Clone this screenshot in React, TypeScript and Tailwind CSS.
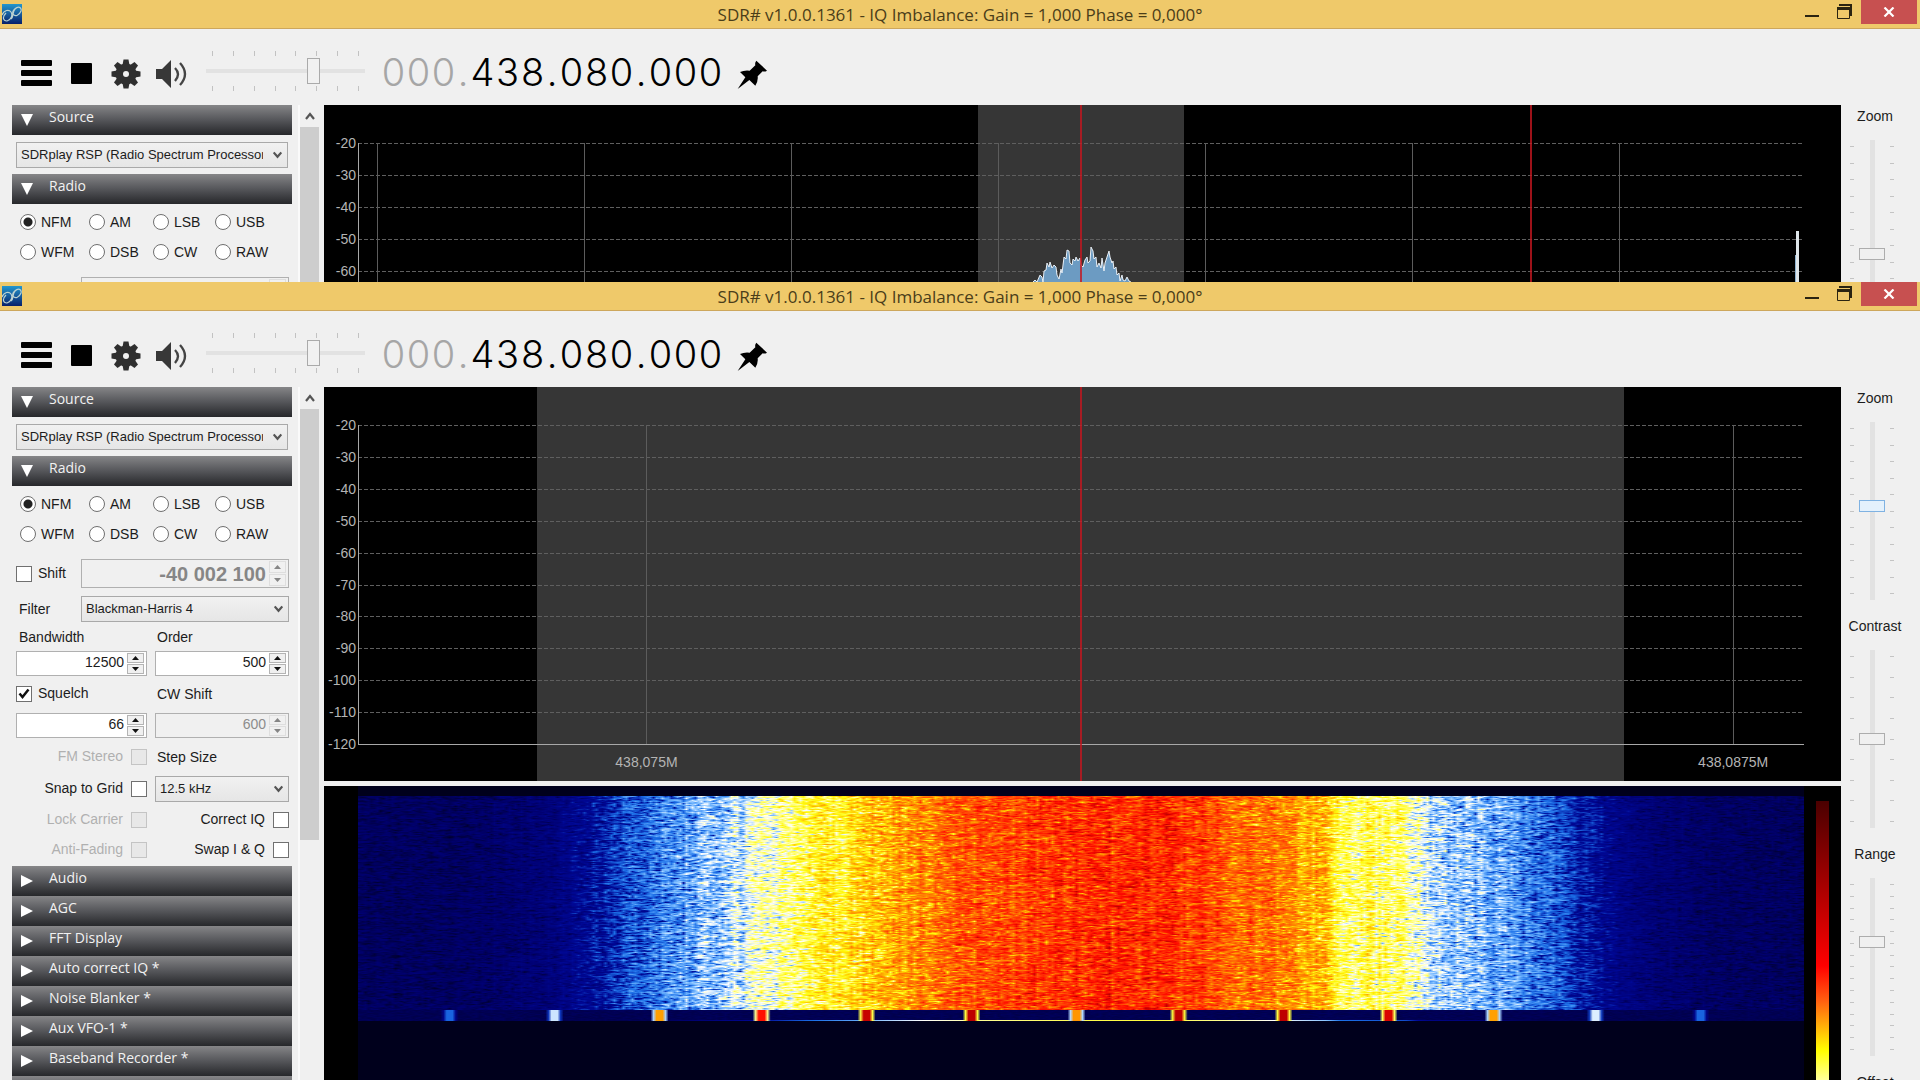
import { useEffect, useId, useRef } from "react";
import type { ReactNode } from "react";

type SpectrumProps = {
  band: [number, number];
  gridLines: number[];
  tuned: number[];
  labels?: { x: number; text: string }[];
  trace?: string;
};

type WindowProps = {
  zoom: number;
  zoomActive?: boolean;
  spectrum: SpectrumProps;
  className: string;
};

const MODES = ["NFM", "AM", "LSB", "USB", "WFM", "DSB", "CW", "RAW"];

const PLUGINS = [
  "Audio",
  "AGC",
  "FFT Display",
  "Auto correct IQ *",
  "Noise Blanker *",
  "Aux VFO-1 *",
  "Baseband Recorder *",
  "Frequency Manager *",
];

const DB_LEVELS = [-20, -30, -40, -50, -60, -70, -80, -90, -100, -110, -120];

// plot geometry, in pixels
const PLOT_TOP = 38;
const PLOT_HEIGHT = 319;
const dbY = (index: number) => PLOT_TOP + Math.round((index * PLOT_HEIGHT) / 10);

const WIDE_SPECTRUM: SpectrumProps = {
  band: [42.9, 57.1],
  gridLines: [1.35, 15.65, 29.95, 44.3, 58.6, 72.9, 87.25],
  tuned: [50, 81.1],
  trace:
    "-48,177 -46,175 -44,177 -41,170 -39,172 -38,177 -37,166 -35,165 -34,158 -32,162 -31,157 -29,163 -27,160 -25,162 -24,170 -22,174 -20,164 -19,168 -17,152 -15,154 -14,145 -12,146 -11,158 -9,160 -8,154 -6,156 -5,152 -3,156 -1,153 0,160 2,162 4,155 6,152 7,158 9,156 10,142 12,146 13,154 15,152 16,162 18,158 20,163 21,153 23,166 24,158 26,152 28,146 29,152 31,158 32,156 33,164 35,162 36,170 38,168 39,176 41,170 42,175 44,176 46,172 48,176 50,177",
};

const NARROW_SPECTRUM: SpectrumProps = {
  band: [12.4, 87.55],
  gridLines: [19.95, 95.1],
  tuned: [50],
  labels: [
    { x: 19.95, text: "438,075M" },
    { x: 95.1, text: "438,0875M" },
  ],
};

export default function App() {
  return (
    <div className="flex h-screen flex-col overflow-hidden bg-[#f0f0f0] font-['Liberation_Sans',sans-serif] text-[14px] text-[#1c1c1c]">
      <SdrWindow className="h-[282px] shrink-0" zoom={35} spectrum={WIDE_SPECTRUM} />
      <SdrWindow className="min-h-0 flex-1" zoom={53} zoomActive spectrum={NARROW_SPECTRUM} />
    </div>
  );
}

function SdrWindow({ zoom, zoomActive = false, spectrum, className }: WindowProps) {
  return (
    <section className={`flex flex-col overflow-hidden ${className}`}>
      <TitleBar />
      <Toolbar />
      <div className="flex min-h-0 flex-1 overflow-hidden">
        <Sidebar />
        <PanelScrollBar />
        <main className="flex min-w-0 flex-1 flex-col gap-[5px]">
          <Spectrum {...spectrum} />
          <Waterfall />
        </main>
        <aside className="flex w-[79px] shrink-0 flex-col">
          <LevelSlider label="Zoom" value={zoom} ticks={11} active={zoomActive} />
          <LevelSlider label="Contrast" value={50} ticks={9} />
          <LevelSlider label="Range" value={65} ticks={15} />
          <LevelSlider label="Offset" value={50} ticks={11} />
        </aside>
      </div>
    </section>
  );
}

function TitleBar() {
  return (
    <header className="flex h-[29px] shrink-0 items-start border-b border-[#cda75c] bg-[#efc96a]">
      <div className="w-[180px] pl-[2px] pt-1">
        <AppLogo />
      </div>
      <h1 className="flex-1 text-center font-['Open_Sans',sans-serif] text-[17px] leading-[30px] text-[#4a3d19]">
        SDR# v1.0.0.1361 - IQ Imbalance: Gain = 1,000 Phase = 0,000°
      </h1>
      <div className="flex w-[180px] justify-end pr-[3px]">
        <button type="button" aria-label="Minimize" className="flex h-6 w-8 justify-center pt-[15px]">
          <span className="h-[2px] w-[14px] bg-[#2b2411]" />
        </button>
        <button type="button" aria-label="Restore" className="flex h-6 w-8 justify-center pt-1">
          <svg width="15" height="15" viewBox="0 0 15 15" fill="none" stroke="#2b2411">
            <path d="M2 1H14V12" strokeWidth="2" />
            <path d="M.5 4V14.500H12.500V4" />
            <path d="M0 4.500H13" strokeWidth="3" />
          </svg>
        </button>
        <button
          type="button"
          aria-label="Close"
          className="ml-px flex h-6 w-14 items-center justify-center bg-[#c75050]"
        >
          <svg width="12" height="10" viewBox="0 0 12 10" stroke="#fff" strokeWidth="2.200">
            <path d="M1.500 .5L10.500 9.500M10.500 .5L1.500 9.500" />
          </svg>
        </button>
      </div>
    </header>
  );
}

function AppLogo() {
  const gradient = useId();
  return (
    <svg width="20" height="20" viewBox="0 0 20 20" fill="none" aria-hidden="true">
      <defs>
        <linearGradient id={gradient} x1="0" y1="0" x2="0" y2="1">
          <stop offset="0" stopColor="#2497cd" />
          <stop offset="1" stopColor="#08206b" />
        </linearGradient>
      </defs>
      <rect width="20" height="20" fill={`url(#${gradient})`} />
      <path
        d="M0 11C2 6 7 5 9 8C11 11 9 16 5 17C1 17 0 13 4 9M9 15C12 13 10 8 13 5C16 2 20 3 19 7C17 12 13 13 11 10C10 8 12 5 14 4"
        stroke="#bcd3d2"
        strokeWidth="1.200"
      />
    </svg>
  );
}

function Toolbar() {
  return (
    <div className="flex h-[76px] shrink-0 items-start pl-[21px]">
      <button type="button" aria-label="Menu" className="mt-[31px] flex w-[31px] flex-col gap-1">
        <span className="h-[6px] w-full rounded-[1px] bg-black" />
        <span className="h-[6px] w-full rounded-[1px] bg-black" />
        <span className="h-[6px] w-full rounded-[1px] bg-black" />
      </button>
      <button type="button" aria-label="Stop" className="ml-[19px] mt-[34px] size-[21px] rounded-[1px] bg-black" />
      <button type="button" aria-label="Settings" className="ml-[19px] mt-[30px]">
        <GearIcon />
      </button>
      <button type="button" aria-label="Mute" className="ml-[15px] mt-[31px]">
        <SpeakerIcon />
      </button>
      <div className="ml-[19px] mt-[22px] flex w-[159px] flex-col">
        <HorizontalTicks />
        <input
          type="range"
          aria-label="Volume"
          defaultValue={69}
          className="my-[2px] h-[26px] w-full appearance-none bg-[linear-gradient(#e2e2e2,#e2e2e2)] bg-[length:100%_4px] bg-center bg-no-repeat [&::-webkit-slider-thumb]:h-[26px] [&::-webkit-slider-thumb]:w-[13px] [&::-webkit-slider-thumb]:appearance-none [&::-webkit-slider-thumb]:border [&::-webkit-slider-thumb]:border-[#aaaaaa] [&::-webkit-slider-thumb]:bg-[#f1f1f1]"
        />
        <HorizontalTicks />
      </div>
      <Frequency />
      <button type="button" aria-label="Center" className="ml-[14px] mt-[31px]">
        <PinIcon />
      </button>
    </div>
  );
}

function HorizontalTicks() {
  return (
    <div className="flex justify-between px-[6px]">
      {Array.from({ length: 8 }, (_, i) => (
        <span key={i} className="h-[5px] w-px bg-[#c2c2c2]" />
      ))}
    </div>
  );
}

function Frequency() {
  return (
    <div
      aria-label="Frequency"
      className="ml-4 mt-[21px] flex font-['Inter',sans-serif] text-[38px] font-light leading-[44px] text-black"
    >
      {"000.438.080.000".split("").map((char, i) => (
        <span
          key={i}
          className={`text-center ${char === "." ? "w-[14px]" : "w-[25px]"} ${i < 4 ? "text-[#a6a6a6]" : ""}`}
        >
          {char}
        </span>
      ))}
    </div>
  );
}

function GearIcon() {
  return (
    <svg width="30" height="30" viewBox="-15 -15 30 30" fill="#2f2f2f">
      {[0, 45, 90, 135].map((angle) => (
        <path key={angle} d="M-2.500 -14.500H2.500L3.500 -9V9L2.500 14.500H-2.500L-3.500 9V-9Z" transform={`rotate(${angle})`} />
      ))}
      <circle r="10.500" />
      <circle r="3" fill="#f0f0f0" />
    </svg>
  );
}

function SpeakerIcon() {
  return (
    <svg width="31" height="28" viewBox="0 0 31 28" fill="none" stroke="#444" strokeWidth="2.300">
      <path d="M0 9H6L15 0V28L6 19H0Z" fill="#383838" stroke="none" />
      <path d="M19 8Q25 14 19 21M24 3Q34 14 24 25" />
    </svg>
  );
}

function PinIcon() {
  return (
    <svg width="30" height="30" viewBox="0 0 90 90" fill="#000">
      <path d="M58 2L90 32Q84 36 77 34L62 49Q64 63 55 77L37 60L2 87L25 52L9 36Q22 30 38 32L55 16Q53 8 58 2Z" />
    </svg>
  );
}

function SectionHeader({ title, open = false }: { title: string; open?: boolean }) {
  return (
    <button
      type="button"
      aria-expanded={open}
      className="flex h-[30px] w-full shrink-0 items-start bg-linear-to-b from-[#868688] via-[#55565a] to-[#27282b] pl-2 text-left font-['Open_Sans',sans-serif] text-[14px] leading-[24px] text-[#f2f2f2]"
    >
      <svg width="14" height="14" viewBox="0 0 14 14" fill="#fff" className="mt-2">
        <path d={open ? "M1 1H13L7 13Z" : "M1 1L13 7L1 13Z"} />
      </svg>
      <span className="ml-[15px]">{title}</span>
    </button>
  );
}

function Dropdown({ label, value, className = "" }: { label: string; value: string; className?: string }) {
  return (
    <div className={`relative h-[26px] ${className}`}>
      <select
        aria-label={label}
        className="h-full w-full appearance-none overflow-hidden border border-[#a9a9a9] bg-linear-to-b from-[#f1f1f1] to-[#e6e6e6] pl-1 pr-6 text-[13px] text-[#1c1c1c]"
      >
        <option>{value}</option>
      </select>
      <svg
        width="9"
        height="8"
        viewBox="0 0 9 8"
        fill="none"
        stroke="#555"
        strokeWidth="2.200"
        className="pointer-events-none absolute right-[6px] top-[9px]"
      >
        <path d="M.7 1.500L4.500 5.800L8.300 1.500" />
      </svg>
    </div>
  );
}

function NumberBox({
  label,
  value,
  disabled = false,
  large = false,
  className = "",
}: {
  label: string;
  value: string;
  disabled?: boolean;
  large?: boolean;
  className?: string;
}) {
  return (
    <div
      className={`flex border border-[#b0b0b0] p-px ${large ? "h-[29px]" : "h-[25px]"} ${disabled ? "bg-[#f0f0f0] text-[#8c8c8c]" : "bg-white"} ${className}`}
    >
      <input
        type="text"
        aria-label={label}
        defaultValue={value}
        disabled={disabled}
        className={`w-0 flex-1 bg-transparent pr-[3px] text-right ${large ? "text-[20px] font-semibold text-[#868686]" : "pb-[2px]"}`}
      />
      <div className="flex w-[18px] flex-col gap-px pr-px">
        <SpinButton label={`${label} up`} d="M0 4L3.500 0L7 4Z" disabled={disabled} />
        <SpinButton label={`${label} down`} d="M0 0L3.500 4L7 0Z" disabled={disabled} />
      </div>
    </div>
  );
}

function SpinButton({ label, d, disabled }: { label: string; d: string; disabled: boolean }) {
  return (
    <button
      type="button"
      aria-label={label}
      disabled={disabled}
      className={`flex flex-1 items-center justify-center border bg-[#f0f0f0] ${disabled ? "border-[#dedede]" : "border-[#b4b4b4]"}`}
    >
      <svg width="7" height="4" viewBox="0 0 7 4" fill={disabled ? "#858585" : "#111"}>
        <path d={d} />
      </svg>
    </button>
  );
}

function CheckField({
  label,
  checked = false,
  disabled = false,
  boxFirst = false,
}: {
  label: string;
  checked?: boolean;
  disabled?: boolean;
  boxFirst?: boolean;
}) {
  return (
    <label
      className={`flex h-[22px] items-center ${boxFirst ? "flex-row-reverse justify-end gap-[6px]" : "justify-end gap-2"} ${disabled ? "text-[#b0b0b0]" : ""}`}
    >
      <span className="-mt-px whitespace-nowrap">{label}</span>
      <span className="relative size-4">
        <input
          type="checkbox"
          defaultChecked={checked}
          disabled={disabled}
          className="peer block size-4 appearance-none border border-[#707070] bg-white disabled:border-[#c4c4c4] disabled:bg-[#e8e8e8]"
        />
        <svg
          width="12"
          height="12"
          viewBox="0 0 12 12"
          fill="none"
          stroke="#111"
          strokeWidth="2.500"
          className="pointer-events-none absolute left-[2px] top-[2px] hidden peer-checked:block"
        >
          <path d="M1.500 5.500L4.500 9L10.500 1.500" />
        </svg>
      </span>
    </label>
  );
}

function TwoColumns({ children, className = "" }: { children: ReactNode; className?: string }) {
  return <div className={`grid grid-cols-[131px_1fr] items-center gap-x-2 ${className}`}>{children}</div>;
}

function Sidebar() {
  const modeGroup = useId();
  return (
    <div className="ml-3 flex w-[280px] shrink-0 flex-col overflow-hidden">
      <SectionHeader title="Source" open />
      <Dropdown
        label="Source device"
        value="SDRplay RSP (Radio Spectrum Processor)"
        className="mx-1 mb-[6px] mt-[7px] shrink-0"
      />
      <SectionHeader title="Radio" open />
      <form className="flex shrink-0 flex-col pl-1 pr-[3px] pt-[3px]">
        <fieldset className="grid grid-cols-[69px_64px_62px_1fr] pl-1">
          {MODES.map((mode, i) => (
            <label key={mode} className="flex h-[30px] items-center gap-[5px]">
              <input
                type="radio"
                name={modeGroup}
                defaultChecked={i === 0}
                className="size-4 appearance-none rounded-full border border-[#6f6f6f] bg-white checked:bg-[radial-gradient(circle,#222_4px,#fff_5px)]"
              />
              {mode}
            </label>
          ))}
        </fieldset>

        <div className="mt-[10px] flex items-center">
          <div className="w-[65px]">
            <CheckField label="Shift" boxFirst />
          </div>
          <NumberBox label="Shift frequency" value="-40 002 100" disabled large className="flex-1" />
        </div>
        <div className="mt-2 flex items-center">
          <span className="w-[65px] pl-[3px]">Filter</span>
          <Dropdown label="Filter" value="Blackman-Harris 4" className="flex-1" />
        </div>

        <TwoColumns className="mt-1 h-[22px]">
          <span className="pl-[3px]">Bandwidth</span>
          <span className="pl-[2px]">Order</span>
        </TwoColumns>
        <TwoColumns className="mt-[3px]">
          <NumberBox label="Bandwidth" value="12500" />
          <NumberBox label="Order" value="500" />
        </TwoColumns>

        <TwoColumns className="mt-[7px]">
          <CheckField label="Squelch" checked boxFirst />
          <span className="pl-[2px]">CW Shift</span>
        </TwoColumns>
        <TwoColumns className="mt-2">
          <NumberBox label="Squelch level" value="66" />
          <NumberBox label="CW Shift" value="600" disabled />
        </TwoColumns>

        <TwoColumns className="mt-2">
          <CheckField label="FM Stereo" disabled />
          <span className="pl-[2px]">Step Size</span>
        </TwoColumns>
        <TwoColumns className="mt-2">
          <CheckField label="Snap to Grid" />
          <Dropdown label="Step size" value="12.5 kHz" />
        </TwoColumns>
        <TwoColumns className="mt-[7px]">
          <CheckField label="Lock Carrier" disabled />
          <CheckField label="Correct IQ" />
        </TwoColumns>
        <TwoColumns className="mb-[5px] mt-2">
          <CheckField label="Anti-Fading" disabled />
          <CheckField label="Swap I & Q" />
        </TwoColumns>
      </form>
      {PLUGINS.map((title) => (
        <SectionHeader key={title} title={title} />
      ))}
    </div>
  );
}

function PanelScrollBar() {
  return (
    <div className="ml-[6px] mr-[5px] flex w-[21px] shrink-0 flex-col border-l-2 border-[#fafafa]">
      <button type="button" aria-label="Scroll up" className="flex h-[22px] shrink-0 items-center justify-center">
        <svg width="10" height="8" viewBox="0 0 10 8" fill="none" stroke="#555" strokeWidth="2.200">
          <path d="M1 7L5 2L9 7" />
        </svg>
      </button>
      <div className="h-[431px] shrink-0 bg-[#cdcdcd]" />
    </div>
  );
}

function Spectrum({ band, gridLines, tuned, labels = [], trace }: SpectrumProps) {
  return (
    <div className="flex h-[394px] shrink-0 bg-black">
      <svg width="34" height="394" fill="#b4b4b4" fontSize="14" textAnchor="end">
        {DB_LEVELS.map((db, i) => (
          <text key={db} x="32" y={dbY(i) + 5}>
            {db}
          </text>
        ))}
      </svg>
      <svg height="394" className="w-0 flex-1 overflow-visible" shapeRendering="crispEdges">
        <rect x={`${band[0]}%`} width={`${band[1] - band[0]}%`} height="100%" fill="#363636" />
        {DB_LEVELS.slice(0, -1).map((db, i) => (
          <line key={db} x1="0" x2="100%" y1={dbY(i)} y2={dbY(i)} stroke="#5f5f5f" strokeDasharray="4 2" />
        ))}
        {gridLines.map((x) => (
          <line key={x} x1={`${x}%`} x2={`${x}%`} y1={PLOT_TOP} y2={PLOT_TOP + PLOT_HEIGHT} stroke="#5c5c5c" />
        ))}
        <path d={`M.5 ${PLOT_TOP}V${PLOT_TOP + PLOT_HEIGHT}`} stroke="#a8a8a8" />
        <line
          x1="0"
          x2="100%"
          y1={PLOT_TOP + PLOT_HEIGHT}
          y2={PLOT_TOP + PLOT_HEIGHT}
          stroke="#a8a8a8"
        />
        {trace && (
          <>
            <svg x="50%" overflow="visible">
              <polygon points={`-48,394 ${trace} 50,394`} fill="#6c9bc2" />
              <polyline points={trace} fill="none" stroke="#e8eef4" shapeRendering="auto" />
            </svg>
            <svg x="99.500%" overflow="visible">
              <rect x="-2" y="150" width="2" height="244" fill="#8fb3cf" />
              <rect x="-1" y="126" width="3" height="268" fill="#dfe6ea" />
            </svg>
          </>
        )}
        {tuned.map((x) => (
          <line key={x} x1={`${x}%`} x2={`${x}%`} y1="0" y2="100%" stroke="#c4161f" strokeWidth="2" strokeOpacity=".8" />
        ))}
        {labels.map(({ x, text }) => (
          <text key={text} x={`${x}%`} y="380" fill="#b4b4b4" fontSize="14" textAnchor="middle">
            {text}
          </text>
        ))}
      </svg>
      <div className="w-[37px]" />
    </div>
  );
}

const PALETTE: [number, number, number, number][] = [
  [0, 0, 0, 28],
  [0.14, 0, 0, 110],
  [0.26, 0, 8, 150],
  [0.35, 28, 112, 232],
  [0.43, 120, 186, 255],
  [0.51, 255, 255, 255],
  [0.58, 255, 255, 130],
  [0.65, 255, 250, 10],
  [0.75, 255, 150, 0],
  [0.84, 255, 75, 5],
  [0.93, 255, 10, 0],
  [1, 190, 0, 0],
];

// average signal level along the width
const PROFILE: [number, number][] = [
  [0, 0.11],
  [0.08, 0.12],
  [0.13, 0.17],
  [0.16, 0.26],
  [0.19, 0.33],
  [0.225, 0.41],
  [0.26, 0.48],
  [0.285, 0.55],
  [0.31, 0.61],
  [0.35, 0.69],
  [0.39, 0.78],
  [0.43, 0.84],
  [0.5, 0.88],
  [0.55, 0.89],
  [0.6, 0.84],
  [0.64, 0.77],
  [0.67, 0.71],
  [0.68, 0.62],
  [0.725, 0.59],
  [0.74, 0.48],
  [0.78, 0.43],
  [0.82, 0.35],
  [0.86, 0.25],
  [0.89, 0.17],
  [0.94, 0.12],
  [1, 0.11],
];

function colorAt(value: number) {
  const v = Math.min(1, Math.max(0, value));
  let i = 1;
  while (PALETTE[i][0] < v) i++;
  const a = PALETTE[i - 1];
  const b = PALETTE[i];
  const t = (v - a[0]) / (b[0] - a[0]);
  return [1, 2, 3].map((c) => a[c] + (b[c] - a[c]) * t);
}

function levelAt(x: number) {
  let i = 1;
  while (PROFILE[i][0] < x) i++;
  const a = PROFILE[i - 1];
  const b = PROFILE[i];
  return a[1] + ((b[1] - a[1]) * (x - a[0])) / (b[0] - a[0]);
}

const CANVAS_WIDTH = 482;
const NOISE_TOP = 10;
const NOISE_END = 224;
const STRIP_END = 235;
const CANVAS_HEIGHT = 294;
const CARRIERS = [0.34, 0.48, 0.74, 0.92, 0.99, 1, 0.75, 1, 1, 0.97, 0.74, 0.49, 0.34];

function drawWaterfall(canvas: HTMLCanvasElement) {
  const ctx = canvas.getContext("2d");
  if (!ctx) return;
  const image = ctx.createImageData(CANVAS_WIDTH, CANVAS_HEIGHT);

  let seed = 1361;
  const random = () => {
    seed = (seed * 1664525 + 1013904223) % 4294967296;
    return seed / 4294967296;
  };
  const offsets = Array.from({ length: CANVAS_WIDTH }, () => (random() - 0.5) * 0.06);
  const previous = new Float32Array(CANVAS_WIDTH);

  for (let y = 0; y < CANVAS_HEIGHT; y++) {
    let smear = 0;
    for (let x = 0; x < CANVAS_WIDTH; x++) {
      const pos = x / (CANVAS_WIDTH - 1);
      let value = 0;
      if (y >= NOISE_TOP && y < NOISE_END) {
        const level = levelAt(pos);
        // log of an exponential gives the long dips of a noise floor
        const burst = Math.log10(-Math.log(1 - random() * 0.998) + 0.02) + 0.18;
        smear = smear * 0.35 + burst * 0.65;
        const noise = smear * 0.8 + previous[x] * 0.2;
        previous[x] = smear;
        value = level + noise * (0.05 + Math.min(level, 0.45) * 0.3) + offsets[x] * Math.min(1, level * 2);
      } else if (y >= NOISE_END && y < STRIP_END) {
        value = 0.08 + random() * 0.03;
        if (y === STRIP_END - 1) value = Math.max(value, levelAt(pos) - 0.27);
      }
      const [r, g, b] = colorAt(value);
      image.data.set([r, g, b, 255], (y * CANVAS_WIDTH + x) * 4);
    }
  }

  CARRIERS.forEach((peak, i) => {
    const center = Math.round(30 + i * 34.75);
    for (let dx = -2; dx <= 2; dx++) {
      const [r, g, b] = colorAt(Math.abs(dx) === 2 ? peak * 0.62 : peak);
      for (let y = NOISE_END; y < STRIP_END; y++) {
        image.data.set([r, g, b, 255], (y * CANVAS_WIDTH + center + dx) * 4);
      }
    }
  });

  ctx.putImageData(image, 0, 0);
}

function Waterfall() {
  const canvasRef = useRef<HTMLCanvasElement>(null);

  useEffect(() => {
    if (canvasRef.current) drawWaterfall(canvasRef.current);
  }, []);

  return (
    <div className="flex min-h-0 flex-1 bg-black pl-[34px]">
      <div className="min-w-0 flex-1 overflow-hidden bg-[#00001c]">
        <canvas
          ref={canvasRef}
          width={CANVAS_WIDTH}
          height={CANVAS_HEIGHT}
          aria-label="Waterfall"
          className="h-[294px] w-full"
        />
      </div>
      <div className="w-[37px] overflow-hidden pl-3 pt-[15px]">
        <div className="h-[500px] w-[13px] bg-[linear-gradient(#4a0000_0px,#ff0000_165px,#ff6010_200px,#ffff00_250px,#ffffa0_280px,#ffffff_300px,#000080_500px)]" />
      </div>
    </div>
  );
}

function VerticalTicks({ count }: { count: number }) {
  return (
    <div className="flex h-[178px] flex-col justify-between py-[6px]">
      {Array.from({ length: count }, (_, i) => (
        <span key={i} className="h-px w-1 bg-[#c4c4c4]" />
      ))}
    </div>
  );
}

function LevelSlider({
  label,
  value,
  ticks,
  active = false,
}: {
  label: string;
  value: number;
  ticks: number;
  active?: boolean;
}) {
  const id = useId();
  return (
    <div className="flex h-[228px] shrink-0 flex-col">
      <label htmlFor={id} className="h-[35px] pr-[11px] text-center leading-[22px]">
        {label}
      </label>
      <div className="flex justify-center gap-[5px] pr-[17px]">
        <VerticalTicks count={ticks} />
        <input
          id={id}
          type="range"
          defaultValue={value}
          className={`h-[178px] w-[26px] appearance-none bg-[linear-gradient(#e2e2e2,#e2e2e2)] bg-[length:5px_100%] bg-center bg-no-repeat [direction:rtl] [writing-mode:vertical-lr] [&::-webkit-slider-thumb]:h-3 [&::-webkit-slider-thumb]:w-[26px] [&::-webkit-slider-thumb]:appearance-none [&::-webkit-slider-thumb]:border ${active ? "[&::-webkit-slider-thumb]:border-[#7fb2e2] [&::-webkit-slider-thumb]:bg-[#e4f1fc]" : "[&::-webkit-slider-thumb]:border-[#adadad] [&::-webkit-slider-thumb]:bg-[#f0f0f0]"}`}
        />
        <VerticalTicks count={ticks} />
      </div>
    </div>
  );
}
